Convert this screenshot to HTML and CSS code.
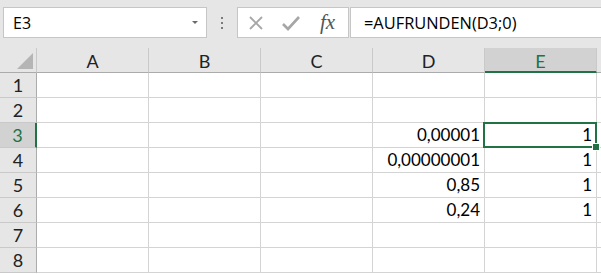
FILE: index.html
```html
<!DOCTYPE html>
<html lang="de">
<head>
<meta charset="UTF-8">
<title>AUFRUNDEN</title>
<link rel="stylesheet" href="styles.css">
</head>
<body>

<div class="formula-bar">
  <div class="name-box">
    <span>E3</span>
    <span class="drop"></span>
  </div>
  <div class="grip"><i></i><i></i><i></i></div>
  <div class="fx-box">
    <svg class="icon" width="16" height="16" viewBox="0 0 16 16"><path d="M2 2 L14 14 M14 2 L2 14" stroke="#a6a6a6" stroke-width="1.8" fill="none"/></svg>
    <svg class="icon" width="18" height="16" viewBox="0 0 18 16"><path d="M1 9 L6 14 L17 2" stroke="#a6a6a6" stroke-width="2.6" fill="none"/></svg>
    <span class="fx">fx</span>
  </div>
  <div class="formula">=AUFRUNDEN(D3;0)</div>
</div>

<div class="sheet">
  <div class="corner"><span class="tri"></span></div>
  <div class="col">A</div>
  <div class="col">B</div>
  <div class="col">C</div>
  <div class="col">D</div>
  <div class="col active">E</div>
  <div class="col"></div>

  <div class="row">1</div><div class="cell"></div><div class="cell"></div><div class="cell"></div><div class="cell"></div><div class="cell"></div><div class="cell"></div>
  <div class="row">2</div><div class="cell"></div><div class="cell"></div><div class="cell"></div><div class="cell"></div><div class="cell"></div><div class="cell"></div>
  <div class="row active">3</div><div class="cell"></div><div class="cell"></div><div class="cell"></div><div class="cell">0,00001</div><div class="cell selected">1</div><div class="cell"></div>
  <div class="row">4</div><div class="cell"></div><div class="cell"></div><div class="cell"></div><div class="cell">0,00000001</div><div class="cell">1</div><div class="cell"></div>
  <div class="row">5</div><div class="cell"></div><div class="cell"></div><div class="cell"></div><div class="cell">0,85</div><div class="cell">1</div><div class="cell"></div>
  <div class="row">6</div><div class="cell"></div><div class="cell"></div><div class="cell"></div><div class="cell">0,24</div><div class="cell">1</div><div class="cell"></div>
  <div class="row">7</div><div class="cell"></div><div class="cell"></div><div class="cell"></div><div class="cell"></div><div class="cell"></div><div class="cell"></div>
  <div class="row">8</div><div class="cell"></div><div class="cell"></div><div class="cell"></div><div class="cell"></div><div class="cell"></div><div class="cell"></div>
</div>

</body>
</html>
```

FILE: styles.css
```css
* {
  box-sizing: border-box;
}
body {
  margin: 0;
  width: 601px;
  height: 274px;
  overflow: hidden;
  background: #fff;
  font-family: Lato, "Open Sans", sans-serif;
  color: #000;
}

/* formula bar */
.formula-bar {
  display: flex;
  height: 48px;
  padding: 7px 0 0 3px;
  background: #e6e6e6;
}
.name-box {
  width: 204px;
  height: 31px;
  background: #fff;
  border: 1px solid #c6c6c6;
  display: flex;
  align-items: center;
  justify-content: space-between;
  padding: 0 8px 0 9px;
  font-family: "Open Sans", sans-serif;
  font-size: 16px;
}
.drop {
  width: 0;
  height: 0;
  border-left: 3px solid transparent;
  border-right: 3px solid transparent;
  border-top: 3px solid #6a6a6a;
}
.grip {
  width: 30px;
  height: 31px;
  display: flex;
  flex-direction: column;
  align-items: center;
  justify-content: center;
  gap: 3px;
}
.grip i {
  width: 2px;
  height: 2px;
  background: #7a7a7a;
}
.fx-box {
  width: 112px;
  height: 31px;
  background: #fff;
  border: 1px solid #c6c6c6;
  display: flex;
  align-items: center;
  padding-left: 10px;
  gap: 18px;
}
.fx {
  font-family: "Liberation Serif", serif;
  font-style: italic;
  font-size: 21px;
  color: #555;
  margin-left: 2px;
}
.formula {
  flex: 1;
  height: 31px;
  margin-left: 1px;
  background: #fff;
  border: 1px solid #c6c6c6;
  border-right: none;
  padding-left: 13px;
  display: flex;
  align-items: center;
  font-family: "Open Sans", sans-serif;
  font-size: 16.4px;
}

/* grid */
.sheet {
  display: grid;
  grid-template-columns: 37px repeat(5, 112px) 1fr;
  grid-template-rows: 25px repeat(8, 25px);
  font-size: 17px;
}
.corner, .col, .row {
  background: #e6e6e6;
  color: #222;
  display: flex;
  align-items: center;
  justify-content: center;
}
.corner {
  border-right: 1px solid #c9c9c9;
  border-bottom: 1px solid #ababab;
  align-items: flex-end;
  justify-content: flex-end;
  padding: 0 3px 3px 0;
}
.tri {
  width: 0;
  height: 0;
  border-left: 16px solid transparent;
  border-bottom: 16px solid #b5b5b5;
}
.col {
  border-right: 1px solid #c9c9c9;
  border-bottom: 1px solid #ababab;
  padding-top: 2px;
  font-size: 18px;
}
.col.active {
  background: #d2d2d2;
  color: #217346;
  border-bottom: 2px solid #217346;
}
.row {
  border-right: 1px solid #ababab;
  border-bottom: 1px solid #c9c9c9;
  font-size: 18px;
}
.row.active {
  background: #d2d2d2;
  color: #217346;
  border-right: 2px solid #217346;
}
.cell {
  border-right: 1px solid #d4d4d4;
  border-bottom: 1px solid #d4d4d4;
  display: flex;
  align-items: flex-end;
  justify-content: flex-end;
  padding: 0 4px 2px 0;
  line-height: 20px;
}
.selected {
  position: relative;
}
.selected::before {
  content: "";
  position: absolute;
  left: -2px;
  top: -1px;
  right: -1px;
  bottom: -1px;
  border: 2px solid #217346;
}
.selected::after {
  content: "";
  position: absolute;
  right: -4px;
  bottom: -4px;
  width: 6px;
  height: 6px;
  background: #217346;
  border: 1px solid #fff;
}
```
